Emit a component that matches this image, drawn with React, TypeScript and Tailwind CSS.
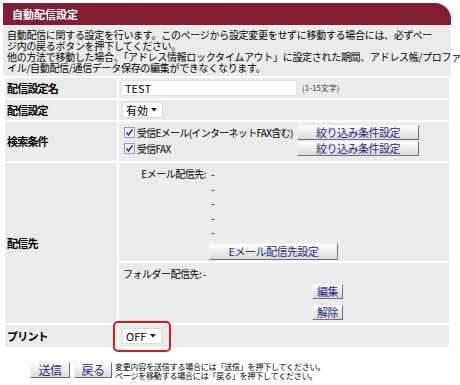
import React from 'react';

const FONT = "font-['Noto_Sans_CJK_JP','Noto_Sans',sans-serif]";

const Btn: React.FC<{ className?: string; children: React.ReactNode }> = ({ className = '', children }) => (
  <button
    className={`flex items-center justify-center bg-linear-to-b from-white to-[#d9d9d9] border border-t-[#f4f4f4] border-l-[#f4f4f4] border-r-[#707070] border-b-[#707070] text-[#1d2a8c] text-[11px] leading-none tracking-[-0.5px] ${className}`}
  >
    {children}
  </button>
);

const Check: React.FC = () => (
  <span className="w-[11px] h-[11px] border border-[#8aa3c0] bg-[#eef3fa] flex items-center justify-center mr-[2px]">
    <svg width="9" height="9" viewBox="0 0 9 9">
      <path d="M1.5 4.5 L3.5 7 L7.5 1.5" stroke="#1b3fb0" strokeWidth="1.6" fill="none" />
    </svg>
  </span>
);

const Select: React.FC<{ value: string; className?: string }> = ({ value, className = '' }) => (
  <div className={`h-[16px] bg-white border border-[#dcdcdc] flex items-center pl-[3px] pr-[5px] text-[11px] leading-none ${className}`}>
    <span className="flex-1">{value}</span>
    <svg width="6" height="4" viewBox="0 0 6 4">
      <polygon points="0,0 6,0 3,3.5" fill="#222" />
    </svg>
  </div>
);

const Label: React.FC<{ children: React.ReactNode }> = ({ children }) => (
  <div className="w-[112px] bg-[#ebebeb] flex items-center pl-[2px] text-[11px] font-bold tracking-[-0.8px]">
    {children}
  </div>
);

export default function App() {
  return (
    <div className={`w-[460px] h-[385px] overflow-hidden bg-white pt-[3px] pl-[3px] text-black ${FONT}`}>
      <div className="w-[448px]">
        <div className="h-[22px] bg-[#821d32] rounded-tr-[16px] text-white text-[11px] font-bold flex items-center pl-[9px]">
          自動配信設定
        </div>
        <div className="h-[51px] bg-[#ebebeb] px-[4px] pt-[4px] text-[10px] leading-[11px] tracking-[-0.3px] whitespace-nowrap">
          自動配信に関する設定を行います。このページから設定変更をせずに移動する場合には、必ずペー
          <br />
          ジ内の戻るボタンを押下してください。
          <br />
          他の方法で移動した場合、「アドレス情報ロックタイムアウト」に設定された期間、アドレス帳/プロファ
          <br />
          イル/自動配信/通信データ保存の編集ができなくなります。
        </div>

        <div className="flex flex-col gap-[2px] p-[2px]">
          <div className="flex gap-[2px] h-[20px]">
            <Label>配信設定名</Label>
            <div className="flex-1 bg-[#ebebeb] flex items-center pl-[2px]">
              <div className="w-[176px] h-[16px] bg-white border border-[#e2e2e2] text-[11px] leading-none flex items-center pl-[3px]">
                TEST
              </div>
              <span className="ml-[5px] text-[8px] text-[#333]">(1-15文字)</span>
            </div>
          </div>

          <div className="flex gap-[2px] h-[20px]">
            <Label>配信設定</Label>
            <div className="flex-1 bg-[#ebebeb] flex items-center pl-[3px]">
              <Select value="有効" className="w-[41px]" />
            </div>
          </div>

          <div className="flex gap-[2px] h-[39px]">
            <Label>検索条件</Label>
            <div className="flex-1 bg-[#ebebeb] flex flex-col gap-[1px] pl-[5px] pt-[3px] text-[10px] tracking-[-0.7px]">
              <div className="flex items-center h-[15px]">
                <div className="w-[173px] flex items-center whitespace-nowrap">
                  <Check />
                  受信Eメール(インターネットFAX含む)
                </div>
                <Btn className="w-[122px] h-[15px]">絞り込み条件設定</Btn>
              </div>
              <div className="flex items-center h-[15px]">
                <div className="w-[173px] flex items-center whitespace-nowrap">
                  <Check />
                  受信FAX
                </div>
                <Btn className="w-[122px] h-[15px]">絞り込み条件設定</Btn>
              </div>
            </div>
          </div>

          <div className="flex gap-[2px]">
            <Label>配信先</Label>
            <div className="flex-1 flex flex-col gap-[2px] text-[10px] tracking-[-0.5px]">
              <div className="h-[98px] bg-[#ebebeb] pt-[4px]">
                <div className="flex leading-[14.5px]">
                  <div className="w-[88px] text-right pr-[1px]">Eメール配信先:</div>
                  <div className="pl-[4px] flex flex-col">
                    <span>-</span>
                    <span>-</span>
                    <span>-</span>
                    <span>-</span>
                    <span>-</span>
                  </div>
                </div>
                <Btn className="ml-[90px] mt-[3px] w-[129px] h-[17px] text-[10.5px]">Eメール配信先設定</Btn>
              </div>
              <div className="h-[60px] bg-[#ebebeb] pl-[4px] pt-[4px]">
                <div className="leading-[14px]">フォルダー配信先: -</div>
                <div className="flex flex-col gap-[6px] ml-[189px] mt-[3px]">
                  <Btn className="w-[31px] h-[15px]">編集</Btn>
                  <Btn className="w-[31px] h-[15px]">解除</Btn>
                </div>
              </div>
            </div>
          </div>

          <div className="flex gap-[2px] h-[22px]">
            <Label>プリント</Label>
            <div className="relative flex-1 bg-[#ebebeb] flex items-center pl-[3px]">
              <Select value="OFF" className="w-[40px] h-[15px]" />
              <div className="absolute left-[-6px] top-[-4px] w-[58px] h-[31px] border-2 border-[#e01818] rounded-[5px]" />
            </div>
          </div>
        </div>
      </div>

      <div className="flex items-start mt-[13px] ml-[27px]">
        <Btn className="w-[40px] h-[16px] text-[12px]">送信</Btn>
        <Btn className="w-[38px] h-[16px] text-[12px] ml-[4px]">戻る</Btn>
        <div className="ml-[3px] text-[8px] leading-[9px] tracking-[-0.2px] whitespace-nowrap">
          変更内容を送信する場合には「送信」を押下してください。
          <br />
          ページを移動する場合には「戻る」を押下してください。
        </div>
      </div>
    </div>
  );
}
